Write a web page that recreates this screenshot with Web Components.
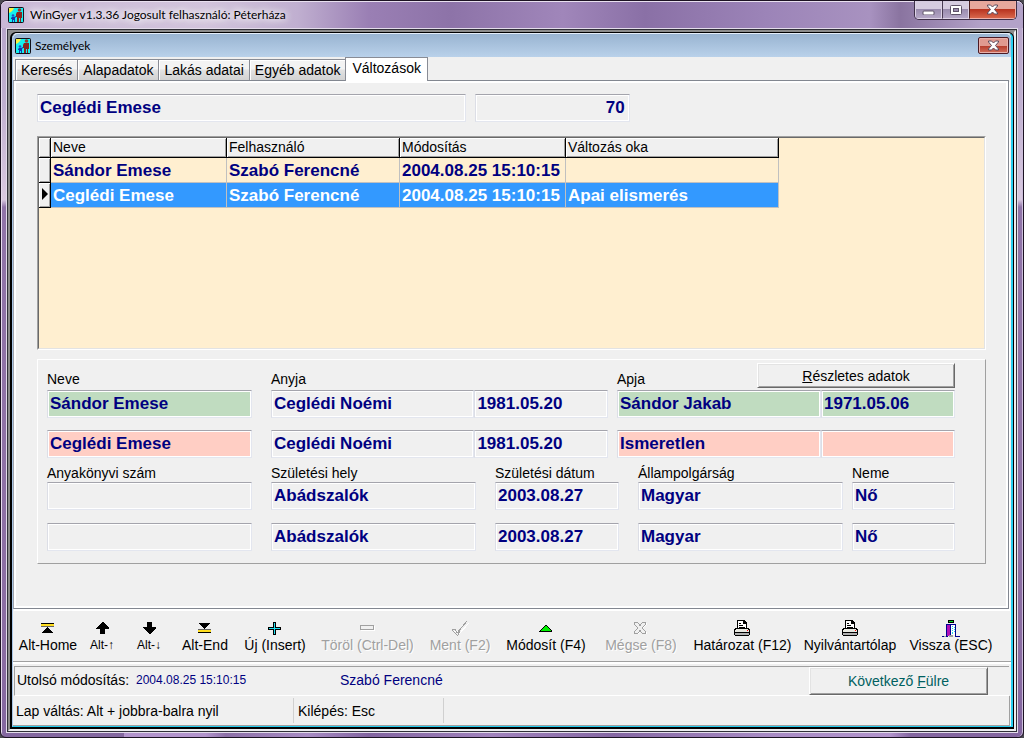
<!DOCTYPE html>
<html lang="hu">
<head>
<meta charset="utf-8">
<meta name="viewport" content="width=device-width, initial-scale=1">
<title>WinGyer</title>
<style>
html, body { margin: 0; background: #4a4a50; }
body { font: 14px/16px "Liberation Sans", Arial, sans-serif; color: #000; }
</style>
</head>
<body>
<wg-frame caption="WinGyer v1.3.36 Jogosult felhasználó: Péterháza">
  <wg-child caption="Személyek">
    <wg-tabs slot="tabs"></wg-tabs>
    <wg-page>
      <wg-heading name="Ceglédi Emese" number="70"></wg-heading>
      <wg-changes></wg-changes>
      <wg-details></wg-details>
    </wg-page>
    <wg-toolbar></wg-toolbar>
    <wg-modified date="2004.08.25 15:10:15" user="Szabó Ferencné"></wg-modified>
    <wg-status></wg-status>
  </wg-child>
</wg-frame>

<script>
const define = (name, render) => customElements.define(name, class extends HTMLElement {
  connectedCallback() {
    if (this.shadowRoot) return;
    this.attachShadow({ mode: 'open' }).innerHTML =
      '<style>*{box-sizing:border-box}button,input{font:inherit;color:inherit;margin:0}button{padding:0}svg{display:block}</style>' + render(this);
  }
});

const appIcon = `<svg class="app" width="16" height="16" viewBox="0 0 16 16" aria-hidden="true">
  <rect width="16" height="16" rx="2" fill="#101018"/><rect x="1" y="1" width="14" height="14" fill="#14f0f0"/>
  <path d="M1 1h5l-1 2-2 2-2 1z" fill="#f8f440"/>
  <circle cx="11.500" cy="3" r="1.800" fill="#9a3c30"/><path d="M9 5h5v6h-1v4h-1v-4h-1v4H9v-5H8V7z" fill="#8a2420"/>
  <circle cx="5" cy="8.500" r="1.300" fill="#1c50c8"/><path d="M4 10h2l2-1v1l-1 1v4H6v-2H5v2H4v-3H3v-1z" fill="#1438b0"/></svg>`;

const closeGlyph = `<svg width="13" height="11" viewBox="0 0 13 11" aria-hidden="true"><path d="M1.500 1h3l2 2 2-2h3v1L8.500 5.500l3 3.500v1h-3l-2-2-2 2h-3V9l3-3.500L1.500 2z" fill="#fff" stroke="#5a4a5c"/></svg>`;

define('wg-frame', el => `<style>
  :host { display: flex; flex-direction: column; box-sizing: border-box; min-height: 100vh; padding: 0 5px 4px 5px;
    border: 1px solid #1c1222; border-radius: 7px 7px 6px 6px; box-shadow: inset 1px 1px #e6dced, inset -1px 0 #cdbfdc;
    background: linear-gradient(#b5a2c8 0, #c0b0d0 14%, #d9c9e0 27%, #9074a8 28%, #8f72a6 60%, #8a6ca2 90%, transparent 98%),
      linear-gradient(90deg, #8468a0 0 12%, #b294cc 12% 20%, #8d70a8 22%, #a88cc4 30%, #8264a0 36%, #a183bd 48%, #8567a3 60%, #a88bc4 75%, #b294cc 87%, #8466a0 89%); }
  header { display: flex; align-items: center; gap: 6px; height: 27px; margin: 0 -5px; padding-left: 7px;
    border-top: 1px solid #e9e0f0; border-radius: 6px 6px 0 0;
    background: linear-gradient(90deg, #c9b8d6 0, #d2c4dc 20%, #c0afd0 29%, #9a7fb4 36%, #8d73a8 44%, #a086ba 55%, #8a70a6 63%, #9c84b8 75%, #a892c0 85%, #8a74a0 88%, #b3a2c8 96%); }
  h1 { flex: 1; margin: 0; font: 12px/16px Lato, "Open Sans", sans-serif; text-shadow: 0 0 6px #fff, 0 0 10px #fff, 0 0 12px #fff; white-space: nowrap; }
  nav { display: flex; align-self: flex-start; height: 19px; margin: -1px 6px 0 0; border: 1px solid #3e3048; border-top: 0; border-radius: 0 0 5px 5px; overflow: hidden; }
  nav button { display: grid; place-items: center; width: 27px; border: 1px solid #ddd3e6; border-top: 0; background: linear-gradient(#d6cce0 0 50%, #9a8cae 50%, #b4a6c6); }
  nav button + button { border-left-color: #4a3c54; }
  nav button:last-child { width: 47px; border-color: #f0b0a8; border-left-color: #4a2020; background: linear-gradient(#e6a79c 0 45%, #b83420 50%, #d8674c); }
  main { display: flex; flex: 1; flex-direction: column; border: 1px solid #e3dcea; }
  .client { display: flex; flex: 1; flex-direction: column; border: 1px solid #303038; background: #8c8c8c; }
  .edge { display: flex; flex: 1; flex-direction: column; border: 2px solid; border-color: #8c8c8c #eeeef2 #eeeef2 #8c8c8c; }
  </style>
  <header>${appIcon}<h1>${el.getAttribute('caption')}</h1>
   <nav><button aria-label="Kis méret"><svg width="13" height="10" viewBox="0 0 13 10"><rect x="1" y="6" width="11" height="4" rx="1" fill="#fff" stroke="#5e5268"/></svg></button>
   <button aria-label="Teljes méret"><svg width="12" height="10" viewBox="0 0 12 10"><rect x=".5" y=".5" width="11" height="9" rx="1" fill="#fff" stroke="#5e5268"/><rect x="3.500" y="3.500" width="5" height="3" fill="#9a8cae" stroke="#5e5268"/></svg></button>
   <button aria-label="Bezárás">${closeGlyph}</button></nav></header>
  <main><div class="client"><div class="edge"><slot></slot></div></div></main>`);

define('wg-child', el => `<style>
  :host { display: flex; flex: 1; flex-direction: column; border: solid #000; border-width: 1px 1px 2px 2px; border-radius: 6px 6px 0 0; background: #111; }
  .win { display: flex; flex: 1; flex-direction: column; border: solid #25cdf0; border-width: 1px 2px 1px 1px; border-left-color: #a9c6e6; border-top-color: #e4eefa; border-radius: 5px 5px 0 0; background: #f0f0f0; }
  header { display: flex; align-items: center; gap: 4px; height: 23px; padding: 0 2px; border-radius: 5px 5px 0 0; background: linear-gradient(#99b4d1, #b9d1ea); }
  h2 { flex: 1; margin: 0; font: 12px/16px Lato, "Open Sans", sans-serif; }
  button { display: grid; place-items: center; width: 31px; height: 17px; border: 1px solid #4c1a24; border-radius: 2px; box-shadow: inset 0 0 0 1px #e8b0aa; background: linear-gradient(#e09a90 0 50%, #b4392a 50%, #d0705c); }
  </style>
  <div class="win"><header>${appIcon}<h2>${el.getAttribute('caption')}</h2><button aria-label="Bezárás">${closeGlyph}</button></header>
  <slot name="tabs"></slot><slot></slot></div>`);

define('wg-tabs', () => `<style>
  :host { display: block; }
  div { display: flex; align-items: flex-end; height: 23px; padding-left: 2px; }
  button { height: 21px; padding: 0 5px; border: solid #898c95; border-width: 1px 1px 0; background: linear-gradient(#f3f3f3 0 45%, #e2e2e2 50%, #d2d2d2); box-shadow: inset 1px 1px #fff; white-space: nowrap; }
  button + button { border-left-width: 0; }
  button[aria-selected=true] { z-index: 1; height: 24px; margin: 0 0 -1px -1px; padding: 0 6px 4px; border-left-width: 1px; background: #fff; }
  </style><div role="tablist">${['Keresés', 'Alapadatok', 'Lakás adatai', 'Egyéb adatok', 'Változások'].map((t, i) =>
    `<button role="tab" aria-selected="${i === 4}">${t}</button>`).join('')}</div>`);

define('wg-page', () => `<style>
  :host { display: block; flex: 1; margin-right: 2px; padding: 13px 22px 0 23px; border: 1px solid #828790; border-left-color: #a0a4ac; box-shadow: inset 0 0 0 2px #fff, 1px 2px #fff; background: #f0f0f0; }
  </style><slot></slot>`);

const fieldCss = `
  input { display: block; width: 100%; min-width: 0; height: 28px; padding: 0 2px; border: 1px solid #e3e6ef; border-top-color: #a4a4ac; border-left-color: #dcdee6;
    border-radius: 0; box-shadow: inset 0 0 0 1px #fff; background: #f0f0f0; color: #000080; font-size: 17px; font-weight: bold; }`;

define('wg-heading', el => `<style>
  :host { display: grid; grid-template-columns: 429fr 9px 154fr 356fr; }
  ${fieldCss}
  .num { grid-column: 3; padding-right: 4px; text-align: right; }
  </style><input readonly aria-label="Név" value="${el.getAttribute('name')}"><input class="num" readonly aria-label="Sorszám" value="${el.getAttribute('number')}">`);

define('wg-changes', () => {
  const head = ['Neve', 'Felhasználó', 'Módosítás', 'Változás oka'];
  const rows = [['Sándor Emese', 'Szabó Ferencné', '2004.08.25 15:10:15', ''],
    ['Ceglédi Emese', 'Szabó Ferencné', '2004.08.25 15:10:15', 'Apai elismerés']];
  return `<style>
  :host { display: block; margin-top: 14px; border: 1px solid; border-color: #a0a0a0 #fff #fff #a0a0a0; background: #ffefd0; }
  div { min-height: 212px; border: 1px solid; border-color: #696969 #e3e3e3 #e3e3e3 #696969; }
  table { width: 740px; table-layout: fixed; border-collapse: separate; border-spacing: 0; }
  th, td { padding: 0 0 0 2px; overflow: hidden; text-align: left; white-space: nowrap; }
  th { height: 20px; padding-bottom: 2px; border: solid #000; border-width: 0 1px 1px 0; background: #f0f0f0; box-shadow: inset 1px 1px #fff, inset -1px -1px #a0a0a0; font-weight: normal; }
  td { height: 25px; padding-top: 2px; border: solid #c0c0c0; border-width: 0 1px 1px 0; color: #000080; font-size: 17px; font-weight: bold; }
  .now td { background: #3399ff; color: #fff; }
  svg { margin-left: 1px; }
  </style><div><table><colgroup><col style="width:12px"><col style="width:176px"><col style="width:173px"><col style="width:166px"><col style="width:213px"></colgroup>
  <thead><tr><th></th>${head.map(h => `<th scope="col">${h}</th>`).join('')}</tr></thead>
  <tbody>${rows.map((r, i) => `<tr class="${i ? 'now' : ''}"><th>${i ? '<svg width="6" height="12" viewBox="0 0 6 12" aria-hidden="true"><path d="M0 0l6 6-6 6z"/></svg>' : ''}</th>${r.map(c => `<td>${c}</td>`).join('')}</tr>`).join('')}</tbody></table></div>`;
});

define('wg-compare', el => {
  const cols = +el.getAttribute('cols') || 1, label = el.getAttribute('label');
  return `<style>
  :host { display: block; min-width: 0; }
  label { display: block; height: var(--label-height); white-space: nowrap; }
  div { display: grid; grid-template-columns: ${cols === 2 ? '204fr 134fr' : '1fr'}; row-gap: var(--field-gap); }
  ${fieldCss}
  :host([tinted]) input { background: #c0dcc0; }
  :host([tinted]) input:nth-child(n + ${cols + 1}) { background: #ffcec4; }
  </style><label for="f0">${label}</label><div>${el.getAttribute('values').split('|').map((v, i) =>
    `<input id="f${i}" readonly value="${v}"${i ? ` aria-label="${label}"` : ''}>`).join('')}</div>`;
});

define('wg-details', () => `<style>
  :host { display: grid; row-gap: 7px; margin-top: 9px; padding: 11px 30px 12px 9px; border: 1px solid; border-color: #fff #a0a0a0 #a0a0a0 #fff; }
  .row { display: grid; position: relative; }
  .a { --label-height: 19px; --field-gap: 12px; grid-template-columns: 205fr 19px 337fr 9px 338fr; }
  .b { --label-height: 17px; --field-gap: 13px; grid-template-columns: 205fr 19px 205fr 19px 124fr 19px 205fr 9px 103fr; }
  .row > wg-compare:nth-of-type(2) { grid-column: 3; } .row > wg-compare:nth-of-type(3) { grid-column: 5; }
  .row > wg-compare:nth-of-type(4) { grid-column: 7; } .row > wg-compare:nth-of-type(5) { grid-column: 9; }
  button { position: absolute; top: -8px; right: 0; width: 198px; height: 25px; border: 1px solid; border-color: #fff #696969 #696969 #fff; box-shadow: inset 1px 1px #e3e3e3, inset -1px -1px #a0a0a0; background: #f0f0f0; }
  </style>
  <div class="row a">
    <wg-compare tinted label="Neve" values="Sándor Emese|Ceglédi Emese"></wg-compare>
    <wg-compare label="Anyja" cols="2" values="Ceglédi Noémi|1981.05.20|Ceglédi Noémi|1981.05.20"></wg-compare>
    <wg-compare tinted label="Apja" cols="2" values="Sándor Jakab|1971.05.06|Ismeretlen|"></wg-compare>
    <button><u>R</u>észletes adatok</button>
  </div>
  <div class="row b">
    <wg-compare label="Anyakönyvi szám" values="|"></wg-compare>
    <wg-compare label="Születési hely" values="Abádszalók|Abádszalók"></wg-compare>
    <wg-compare label="Születési dátum" values="2003.08.27|2003.08.27"></wg-compare>
    <wg-compare label="Állampolgárság" values="Magyar|Magyar"></wg-compare>
    <wg-compare label="Neme" values="Nő|Nő"></wg-compare>
  </div>`);

const svg = (w, h, body) => `<svg width="${w}" height="${h}" viewBox="0 0 ${w} ${h}" shape-rendering="crispEdges" aria-hidden="true">${body}</svg>`;
const printer = svg(16, 16, `<path d="M3 0h7l3 3v6H3z" fill="#000"/><path d="M4 1h5v3h3v5H4z" fill="#fff"/><path d="M10 2h1v1h-1zM5 3h2v1H5zM5 5h4v1H5zM5 7h6v1H5z" fill="#000"/>
  <path d="M1 8h14v1h1v6h-1v1H1v-1H0V9h1z" fill="#000"/><path d="M2 9h12v1H2zM1 10h14v2H1z" fill="#e8e8e0"/><path d="M13 10h1v1h-1z" fill="#f00"/><path d="M1 13h14v2H1z" fill="#b0b0b0"/>`);
const ICONS = {
  first: svg(13, 10, '<path d="M0 0h13v1H0z"/><path d="M0 1h13v2H0z" fill="#ffde20"/><path d="M0 3h13v1H0z" fill="#666"/><path d="M6 4h1v1h1v1h1v1h1v1h1v1h1v1H1V9h1V8h1V7h1V6h1V5h1z"/>'),
  up: svg(13, 12, '<path d="M6 0h1l6 6v1H9v5H4V7H0V6z"/>'),
  down: svg(13, 12, '<path d="M6 12h1l6-6V5H9V0H4v5H0v1z"/>'),
  last: svg(13, 10, '<path d="M1 0h11v1h-1v1h-1v1H9v1H8v1H7v1H6V5H5V4H4V3H3V2H2V1H1z"/><path d="M0 6h13v1H0z" fill="#666"/><path d="M0 7h13v2H0z" fill="#ffde20"/><path d="M0 9h13v1H0z"/>'),
  plus: svg(13, 13, '<path d="M5 0h3v5h5v3H8v5H5V8H0V5h5z"/><path d="M6 1h1v5h5v1H7v5H6V7H1V6h5z" fill="#20e0f0"/>'),
  minus: svg(15, 6, '<path d="M1 1h14v5H1z" fill="#fff"/><path d="M0 0h14v5H0z" fill="#a0a0a0"/><path d="M1 1h12v3H1z" fill="#f0f0f0"/>'),
  check: svg(17, 15, '<g fill="none"><path d="M1 9h3l2 3L16 1" stroke="#fff" transform="translate(1 1)"/><path d="M0 8h3l2 4L15 0M0 9l5 5h1l2-5" stroke="#a0a0a0"/></g>'),
  edit: svg(13, 7, '<path d="M6 0h1l6 6v1H0V6z"/><path d="M6 1h1l5 5H1z" fill="#00f000"/>'),
  cross: svg(14, 13, '<path d="M2 1h3l2 3 3-3h3v2L9 6.500l4 4V12h-3L7 9l-2 3H2v-2l3-3.500L2 3z" fill="#fff"/><path d="M.5.500h3l2.500 3 2.500-3h3v2L8 6l3.500 3.500v2h-3L6 8.500l-2.500 3h-3v-2L4 6 .5 2.500z" fill="#f0f0f0" stroke="#a0a0a0"/>'),
  print: printer,
  exit: svg(18, 17, '<path d="M6 0h6v3H6z"/><path d="M7 1h4v1H7z" fill="#00e020"/><path d="M4 4h10v12h4v1h-5V5H9v11H6v1H0v-1h4z" fill="#000090"/><path d="M5 5h3v11H5z" fill="#b010b8"/><path d="M9 5h4v10H9z" fill="#fff"/><path d="M10 6h1v1h-1zM12 7h1v1h-1zM10 8h1v1h-1zM12 9h1v1h-1zM10 10h1v1h-1zM12 11h1v1h-1zM10 12h1v2h-1z" fill="#20d8e8"/><path d="M2 16h2v1H2zM7 15h4v2H7z" fill="#a0a0a0"/>')
};

define('wg-toolbar', () => {
  const items = [['first', 'Alt-Home'], ['up', 'Alt-↑', 's'], ['down', 'Alt-↓', 's'], ['last', 'Alt-End'], ['plus', 'Új (Insert)'],
    ['minus', 'Töröl (Ctrl-Del)', 'off'], ['check', 'Ment (F2)', 'off'], ['edit', 'Módosít (F4)'], ['cross', 'Mégse (F8)', 'off'],
    ['print', 'Határozat (F12)'], ['print', 'Nyilvántartólap'], ['exit', 'Vissza (ESC)']];
  const w = [70, 38, 56, 56, 84, 101, 84, 88, 102, 101, 114, 88, 16];
  return `<style>
  :host { display: grid; grid-template-columns: ${w.map(n => `minmax(0, ${n}fr)`).join(' ')}; padding: 8px 0; margin-top: 2px; border-bottom: 1px solid #a0a0a0; box-shadow: 0 2px #fff; }
  button { display: grid; grid-template-rows: 18px 16px; place-items: center; justify-content: center; border: 0; background: none; white-space: nowrap; }
  button:disabled { color: #a0a0a0; text-shadow: 1px 1px #fff; }
  .s { font-size: 12px; }
  </style>${items.map(([i, t, c]) => `<button class="${c || ''}"${c === 'off' ? ' disabled' : ''}>${ICONS[i]}<span>${t}</span></button>`).join('')}`;
});

define('wg-modified', el => `<style>
  :host { display: flex; align-items: center; height: 28px; margin: 4px 2px 0 1px; padding-left: 2px; border: solid; border-width: 1px 0 1px 1px; border-color: #a0a0a0 #fff #fff #a0a0a0; }
  span, output { padding-bottom: 3px; white-space: nowrap; }
  span { width: 119px; }
  output { width: 204px; color: #000080; font-size: 12px; }
  .who { font-size: 14px; }
  button { width: 179px; height: 28px; margin: 0 21px 0 auto; border: 1px solid; border-color: #fff #696969 #696969 #fff; box-shadow: inset 1px 1px #e3e3e3, inset -1px -1px #a0a0a0; background: #f0f0f0; color: #006060; }
  </style><span>Utolsó módosítás:</span><output>${el.getAttribute('date')}</output><output class="who">${el.getAttribute('user')}</output><button>Következő <u>F</u>ülre</button>`);

define('wg-status', () => `<style>
  :host { display: flex; height: 25px; padding: 2px 0; margin-right: 1px; border: solid #a0a0a0; border-width: 0 1px 1px 0; }
  span { padding: 5px 0 0 3px; border-right: 1px solid #d0d0d0; white-space: nowrap; }
  .move { width: 281px; } .exit { width: 150px; padding-left: 4px; }
  </style><span class="move">Lap váltás: Alt + jobbra-balra nyil</span><span class="exit">Kilépés: Esc</span>`);
</script>
</body>
</html>
